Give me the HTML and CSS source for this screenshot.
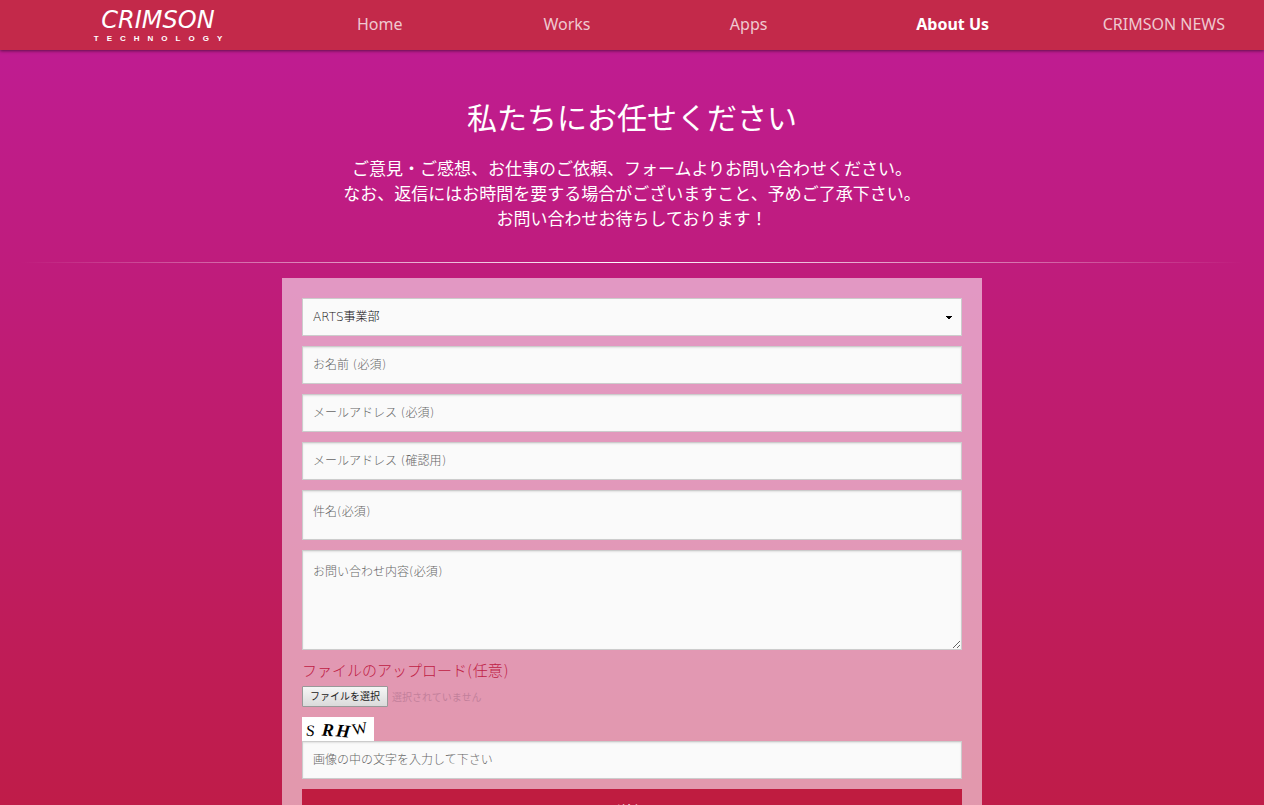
FILE: index.html
```html
<!DOCTYPE html>
<html lang="ja">

<head>
    <meta charset="UTF-8">
    <meta name="viewport" content="width=device-width, initial-scale=1.0">
    <title>About Us | CRIMSON TECHNOLOGY</title>
    <link rel="stylesheet" href="styles.css">
</head>

<body>
    <header class="header">
        <a class="logo" href="#">
            <span class="logo-name">CRIMSON</span>
            <span class="logo-sub">TECHNOLOGY</span>
        </a>
        <nav class="nav">
            <a href="#">Home</a>
            <a href="#">Works</a>
            <a href="#">Apps</a>
            <a class="current" href="#">About Us</a>
            <a href="#">CRIMSON NEWS</a>
        </nav>
    </header>

    <main>
        <section class="intro">
            <h1>私たちにお任せください</h1>
            <p>
                ご意見・ご感想、お仕事のご依頼、フォームよりお問い合わせください。<br>
                なお、返信にはお時間を要する場合がございますこと、予めご了承下さい。<br>
                お問い合わせお待ちしております！
            </p>
        </section>
        <hr class="line">

        <!-- お問い合わせフォーム -->
        <form class="contact">
            <select class="field select" name="section" aria-label="部署">
                <option>ARTS事業部</option>
            </select>
            <input class="field" type="text" name="name" placeholder="お名前 (必須)" aria-label="お名前">
            <input class="field" type="email" name="mail" placeholder="メールアドレス (必須)" aria-label="メールアドレス">
            <input class="field" type="email" name="mail2" placeholder="メールアドレス (確認用)" aria-label="メールアドレス (確認用)">
            <textarea class="field subject" name="subject" placeholder="件名(必須)" aria-label="件名"></textarea>
            <textarea class="field message" name="message" placeholder="お問い合わせ内容(必須)" aria-label="お問い合わせ内容"></textarea>

            <!-- ファイル -->
            <div class="upload">
                <label class="upload-title" for="file">ファイルのアップロード(任意)</label>
                <input class="upload-input" type="file" id="file" name="file">
                <label class="upload-row" for="file">
                    <span class="upload-btn">ファイルを選択</span>
                    <span class="upload-none">選択されていません</span>
                </label>
            </div>

            <!-- 画像認証 -->
            <div class="captcha">
                <svg class="captcha-img" width="72" height="24" viewBox="0 0 72 24" role="img" aria-labelledby="captcha-title">
                    <title id="captcha-title">画像認証</title>
                    <rect width="72" height="24" fill="#fff" />
                    <text class="c-thin" x="4" y="19" transform="rotate(6 9 13)">S</text>
                    <text class="c-bold" x="20" y="19" transform="rotate(4 26 13)">R</text>
                    <text class="c-bold" x="34" y="20" transform="rotate(6 41 14)">H</text>
                    <text class="c-thin" x="50" y="17" transform="rotate(-10 56 11)">W</text>
                </svg>
                <input class="field" type="text" name="captcha" placeholder="画像の中の文字を入力して下さい" aria-label="画像の中の文字">
            </div>

            <button class="submit" type="submit">送信</button>
        </form>
    </main>
</body>

</html>
```
FILE: styles.css
```css
* {
    box-sizing: border-box;
}

body {
    margin: 0;
    min-height: 100vh;
    font-family: "Noto Sans", "Noto Sans CJK JP", sans-serif;
    color: #fff;
    background: linear-gradient(#bf1c96, #bf1c44) no-repeat;
}

.header {
    position: relative;
    display: flex;
    align-items: center;
    height: 50px;
    padding: 0 39px 0 85px;
    background: #c3294a;
    box-shadow: 0 1px 3px rgba(0, 0, 0, .5);
}

.logo {
    display: flex;
    flex-direction: column;
    align-items: center;
    width: 146px;
    margin-right: 126px;
    color: #fff;
    text-decoration: none;
}

.logo-name {
    font: italic 24px/28px "DejaVu Sans", sans-serif;
}

.logo-sub {
    font: bold 8px/10px "Liberation Sans", sans-serif;
    letter-spacing: 8px;
    margin-right: -8px;
}

.nav {
    flex: 1;
    display: grid;
    grid-template-columns: repeat(4, 1fr) auto;
    padding-bottom: 3px;
}

.nav a {
    font-size: 16px;
    line-height: 24px;
    color: rgba(255, 255, 255, .75);
    text-decoration: none;
    white-space: nowrap;
}

.nav a:hover,
.nav .current {
    color: #fff;
}

.nav .current {
    font-weight: bold;
}

.intro {
    padding: 45px 20px 31px;
    text-align: center;
}

.intro h1 {
    margin: 0 0 16px;
    font-size: 30px;
    line-height: 45px;
    font-weight: 400;
}

.intro p {
    margin: 0;
    font-size: 17px;
    line-height: 25px;
}

.line {
    height: 1px;
    margin: 0 20px 15px;
    border: 0;
    background: linear-gradient(90deg, rgba(255, 255, 255, 0), #fff, rgba(255, 255, 255, 0));
}

.contact {
    display: flex;
    flex-direction: column;
    gap: 10px;
    max-width: 700px;
    margin: 0 auto;
    padding: 20px;
    background: rgba(255, 255, 255, .55);
}

.field {
    display: block;
    width: 100%;
    height: 38px;
    margin: 0;
    padding: 0 10px;
    border: 1px solid #ccc;
    border-radius: 0;
    background: #fafafa;
    box-shadow: inset 0 1px 2px rgba(0, 0, 0, .1);
    font-family: "DejaVu Sans", "Noto Sans CJK JP", sans-serif;
    font-size: 12px;
    font-weight: 300;
    color: #111;
}

.field::placeholder {
    color: #666;
    opacity: 1;
}

.field:focus {
    outline: none;
    border-color: #999;
}

.select {
    appearance: none;
    box-shadow: none;
    /* 下向きの矢印 */
    background: linear-gradient(#000, #000) right 9px top 17px / 6px 1px no-repeat,
        linear-gradient(#000, #000) right 10px top 18px / 4px 1px no-repeat,
        linear-gradient(#000, #000) right 11px top 19px / 2px 1px no-repeat,
        #fafafa;
}

.subject,
.message {
    padding: 10px;
    line-height: 22px;
}

.subject {
    height: 50px;
    resize: none;
}

.message {
    height: 100px;
    resize: vertical;
}

.upload {
    display: flex;
    flex-direction: column;
    align-items: flex-start;
    position: relative;
}

.upload-title {
    font-family: "DejaVu Sans", "Noto Sans CJK JP", sans-serif;
    font-size: 15px;
    line-height: 22px;
    font-weight: 300;
    color: #bf1c44;
    margin-bottom: 4px;
}

.upload-input {
    position: absolute;
    width: 1px;
    height: 1px;
    opacity: 0;
}

.upload-row {
    display: flex;
    align-items: center;
    gap: 4px;
    font-size: 10px;
}

.upload-btn {
    padding: 0 7px;
    line-height: 19px;
    border: 1px solid #999;
    border-radius: 1px;
    background: linear-gradient(#f6f6f6, #dadada);
    color: #222;
}

.upload-none {
    color: #c2809b;
}

.captcha-img {
    display: block;
}

.captcha-img text {
    font-family: "Liberation Serif", serif;
    fill: #000;
}

.c-thin {
    font-size: 16px;
}

.c-bold {
    font-size: 18px;
    font-weight: bold;
    font-style: italic;
}

.submit {
    padding: 13px 0;
    border: 0;
    background: #bf1c40;
    color: #fff;
    font-family: inherit;
    font-size: 15px;
    line-height: 18px;
    cursor: pointer;
}
```
